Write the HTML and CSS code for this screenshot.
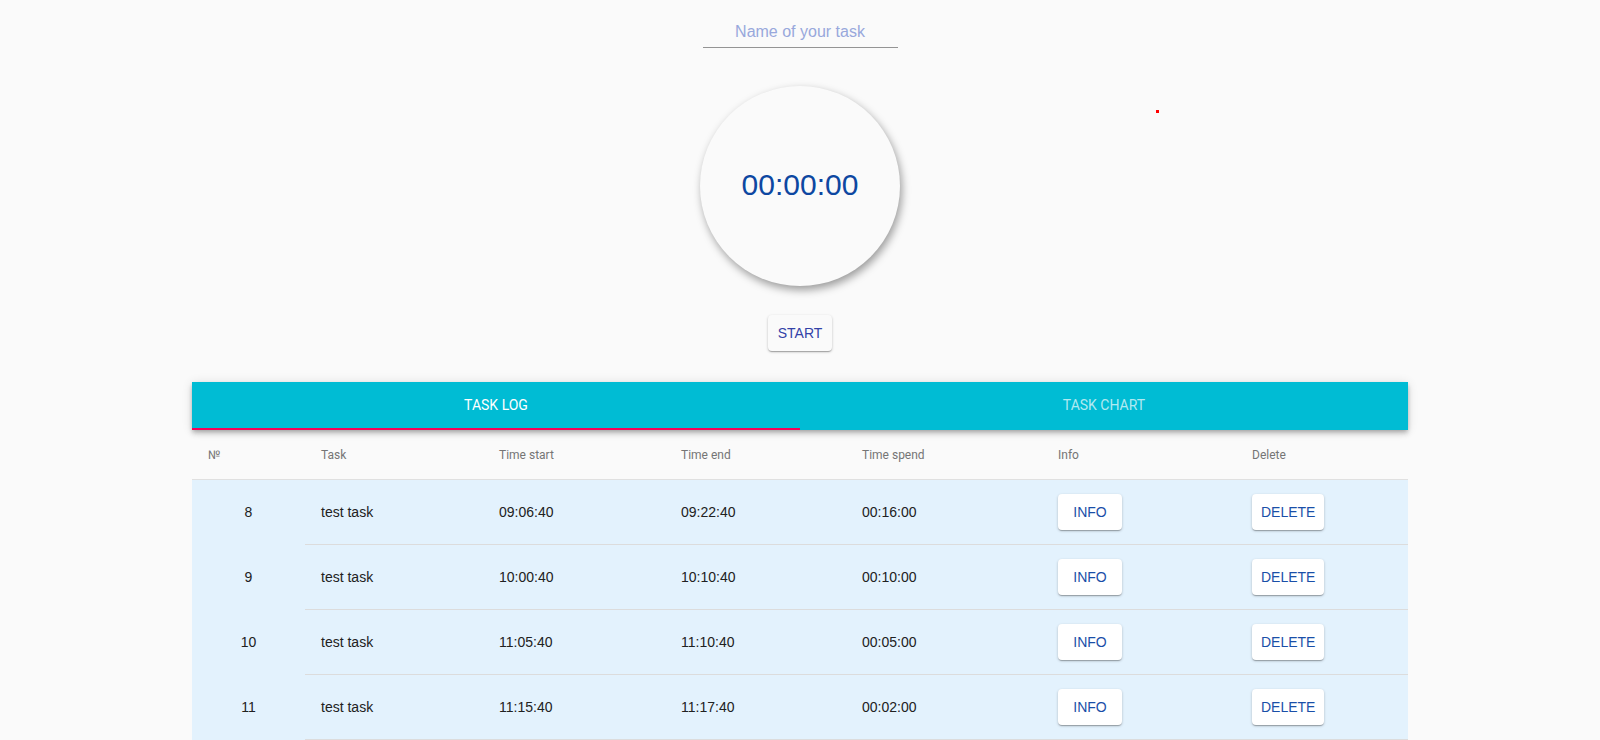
FILE: index.html
```html
<!DOCTYPE html>
<html lang="en">
<head>
<meta charset="utf-8">
<title>Timer</title>
<link rel="stylesheet" href="styles.css">
</head>
<body>
<div class="page">
  <div class="task-field">
    <input class="task-input" type="text" placeholder="Name of your task">
  </div>
  <div class="clock"><span class="clock-time">00:00:00</span></div>
  <button class="btn btn-start">START</button>
  <div class="tabs-wrap">
    <div class="tabs">
      <div class="tab tab-active">TASK LOG</div>
      <div class="tab">TASK CHART</div>
    </div>
    <table class="log">
      <colgroup>
        <col class="c-num"><col class="c-task"><col class="c-start"><col class="c-end"><col class="c-spend"><col class="c-info"><col class="c-del">
      </colgroup>
      <thead>
        <tr>
          <th>№</th><th>Task</th><th>Time start</th><th>Time end</th><th>Time spend</th><th>Info</th><th>Delete</th>
        </tr>
      </thead>
      <tbody>
        <tr>
          <td class="num">8</td><td>test task</td><td>09:06:40</td><td>09:22:40</td><td>00:16:00</td>
          <td><button class="btn">INFO</button></td><td><button class="btn">DELETE</button></td>
        </tr>
        <tr>
          <td class="num">9</td><td>test task</td><td>10:00:40</td><td>10:10:40</td><td>00:10:00</td>
          <td><button class="btn">INFO</button></td><td><button class="btn">DELETE</button></td>
        </tr>
        <tr>
          <td class="num">10</td><td>test task</td><td>11:05:40</td><td>11:10:40</td><td>00:05:00</td>
          <td><button class="btn">INFO</button></td><td><button class="btn">DELETE</button></td>
        </tr>
        <tr>
          <td class="num">11</td><td>test task</td><td>11:15:40</td><td>11:17:40</td><td>00:02:00</td>
          <td><button class="btn">INFO</button></td><td><button class="btn">DELETE</button></td>
        </tr>
      </tbody>
    </table>
  </div>
  <span class="dot"></span>
</div>
</body>
</html>
```

FILE: styles.css
```css
html, body {
  margin: 0;
  padding: 0;
  background: #fafafa;
}
body {
  font-family: "Liberation Sans", Arial, sans-serif;
  color: #212121;
}
.page {
  position: relative;
  display: flex;
  flex-direction: column;
  align-items: center;
  padding-top: 17px;
}
.task-field {
  width: 195px;
}
.task-input {
  display: block;
  width: 100%;
  box-sizing: border-box;
  height: 31px;
  border: none;
  border-bottom: 1px solid #949494;
  background: transparent;
  font-family: "Liberation Sans", Arial, sans-serif;
  font-size: 16px;
  text-align: center;
  color: #212121;
  padding: 0;
  outline: none;
}
.task-input::placeholder {
  color: #98a8dc;
}
.clock {
  margin-top: 38px;
  width: 200px;
  height: 200px;
  border-radius: 50%;
  background: #fafafa;
  box-shadow: 2px 4px 9px rgba(0, 0, 0, 0.38);
  display: flex;
  align-items: center;
  justify-content: center;
}
.clock-time {
  font-size: 30px;
  color: #0d47a1;
  margin-top: -2px;
}
.btn {
  font-family: "Liberation Sans", Arial, sans-serif;
  font-size: 14px;
  color: #1a4fa8;
  background: #fff;
  border: none;
  border-radius: 4px;
  height: 36px;
  min-width: 64px;
  padding: 0 9px;
  box-shadow: 0 1px 3px rgba(0, 0, 0, 0.2), 0 1px 1px rgba(0, 0, 0, 0.14), 0 2px 1px -1px rgba(0, 0, 0, 0.12);
  cursor: pointer;
}
.btn-start {
  margin-top: 29px;
  background: #fafafa;
  color: #3342a8;
}
.tabs-wrap {
  margin-top: 31px;
  width: 1216px;
}
.tabs {
  display: flex;
  height: 48px;
  background: #00bcd4;
  box-shadow: 0 2px 4px -1px rgba(0, 0, 0, 0.2), 0 4px 5px 0 rgba(0, 0, 0, 0.14), 0 1px 10px 0 rgba(0, 0, 0, 0.12);
  position: relative;
  z-index: 1;
}
.tab {
  flex: 1;
  display: flex;
  align-items: center;
  justify-content: center;
  font-family: Roboto, "Liberation Sans", sans-serif;
  font-size: 14px;
  font-weight: 400;
  color: rgba(255, 255, 255, 0.7);
  box-sizing: border-box;
  padding-bottom: 2px;
}
.tab-active {
  color: #fff;
  border-bottom: 2px solid #f50057;
  padding-bottom: 0;
}
.log {
  width: 1216px;
  border-collapse: collapse;
  table-layout: fixed;
}
.c-num { width: 113px; }
.c-task { width: 178px; }
.c-start { width: 182px; }
.c-end { width: 181px; }
.c-spend { width: 196px; }
.c-info { width: 194px; }
.c-del { width: 172px; }
.log th {
  height: 49px;
  padding: 0 0 0 16px;
  text-align: left;
  font-family: Roboto, "Liberation Sans", sans-serif;
  font-size: 12px;
  font-weight: 400;
  color: #757575;
  background: #fafafa;
  border-bottom: 1px solid #e0e0e0;
}
.log tbody tr {
  background: #e3f2fd;
}
.log td {
  height: 64px;
  padding: 0 0 0 16px;
  font-size: 14px;
  color: #212121;
  border-bottom: 1px solid #dcdcdc;
  vertical-align: middle;
}
.log td.num {
  text-align: center;
  padding: 0;
  border-bottom: none;
}
.log td .btn {
  vertical-align: middle;
}
.dot {
  position: absolute;
  left: 1156px;
  top: 110px;
  width: 3px;
  height: 3px;
  background: #ff0000;
}
```
